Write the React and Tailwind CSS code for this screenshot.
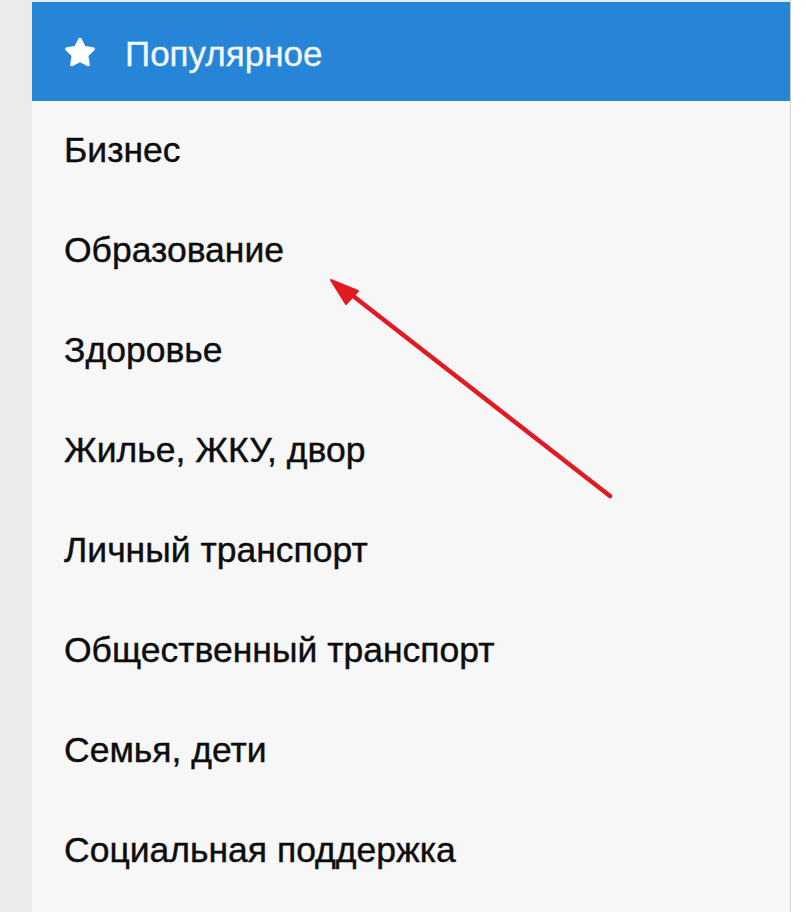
import React from "react";
import { FaStar } from "react-icons/fa";

const items = [
  "Бизнес",
  "Образование",
  "Здоровье",
  "Жилье, ЖКУ, двор",
  "Личный транспорт",
  "Общественный транспорт",
  "Семья, дети",
  "Социальная поддержка",
];

export default function App() {
  return (
    <div
      className="relative w-[806px] h-[912px] flex bg-white overflow-hidden"
      style={{ fontFamily: '"Liberation Sans", Arial, sans-serif' }}
    >
      <div className="w-[32px] h-full bg-[#ebebeb]" />
      <div className="w-[759px] h-full bg-[#f7f7f7] border-r border-[#cfcfcf] flex flex-col">
        <div className="h-[2px] bg-[#e6eef6]" />
        <div className="h-[99px] bg-[#2785d8] flex items-center pl-[32px] text-white">
          <FaStar size={32} className="text-white" />
          <span className="ml-[29px] mt-[3px] text-[35px] leading-none text-[#f4f8fc] [-webkit-text-stroke:0.3px_#f4f8fc]">
            Популярное
          </span>
        </div>
        {items.map((t) => (
          <div
            key={t}
            className="h-[100px] flex items-center pl-[32px] text-[35.5px] leading-none text-[#0d0d0d] [-webkit-text-stroke:0.4px_#0d0d0d]"
          >
            {t}
          </div>
        ))}
      </div>
      <div className="flex-1 h-full bg-white" />
      <svg className="absolute left-0 top-0 pointer-events-none" width="806" height="912">
        <line x1="610" y1="496" x2="348" y2="292" stroke="#e01b22" strokeWidth="4.5" strokeLinecap="round" />
        <polygon points="331,280 358,291 346,304" fill="#e01b22" stroke="#e01b22" strokeWidth="2" strokeLinejoin="round" />
      </svg>
    </div>
  );
}
